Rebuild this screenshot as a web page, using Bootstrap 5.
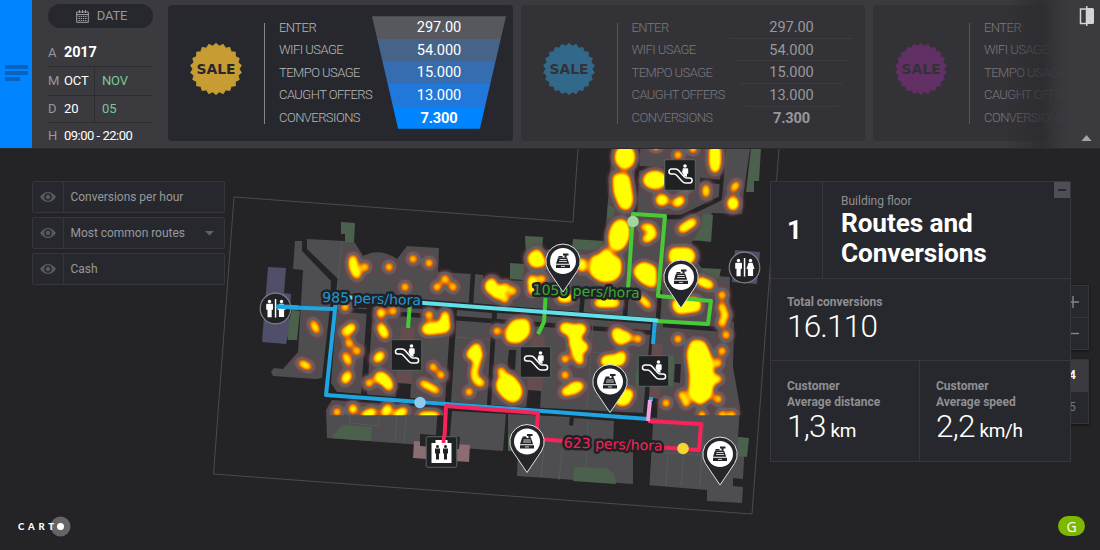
<!DOCTYPE html>
<html lang="en">
<head>
<meta charset="utf-8">
<meta name="viewport" content="width=device-width, initial-scale=1">
<title>Routes and Conversions</title>
<link href="https://cdn.jsdelivr.net/npm/bootstrap@5.3.0/dist/css/bootstrap.min.css" rel="stylesheet">
<style>
body{background:#242426;font-family:Roboto,"Liberation Sans",sans-serif;width:1100px;height:550px;overflow:hidden;position:relative;color:#fff}
.topbar{height:149px;background:#3b3a3f;border-bottom:1px solid #2b2b2d;z-index:3}
.menu-btn{width:32px;background:#0084ff;flex:none;padding:65px 4px 0 5px}
.menu-btn i{display:block;height:4px;background:#0864be;margin-bottom:2px}
.menu-btn i:last-child{width:15px}
.dates{width:105px;margin:4px 15px 0 16px;flex:none;font-size:13px;letter-spacing:-.15px}
.pill{height:24px;border-radius:12px;background:#27282d;color:#97979a;padding-left:2px}
.dates .k{width:16px;color:#98989b}
.dates .ln{border-bottom:1px solid #2d2d31}
.dates .a{width:31px;border-right:1px solid #2d2d31;line-height:inherit}
.grn{color:#77ca97;padding-left:7px}
.offer{width:344.5px;height:136px;border-radius:4px;background:#333237;flex:none;margin:4.5px 8px 0 0}
.offer.on{background:#27282d}
.sale{width:54px;height:54px;margin-left:21px;margin-top:-8px;flex:none}
.bar-v{width:1px;height:101px;background:#55555a;margin-left:21px;flex:none;margin-top:2px}
.on .bar-v{background:#86868a}
.labels{margin-left:14px;width:93px;font-size:13px;font-weight:300;color:#7a7a7f;height:113px;white-space:nowrap;letter-spacing:-.55px;margin-top:-1px}
.on .labels{color:#b8b8bb}
.labels div,.funnel div{height:22.6px;line-height:23px}
.funnel{width:134px;text-align:center;clip-path:polygon(0 0,100% 0,80.5% 100%,19.5% 100%);font-size:14.6px;color:#98989b;height:112.5px;letter-spacing:-.1px}
.funnel div{border-bottom:1px solid #3c3b40}
.on .funnel{color:#fff}
.on .funnel div{border:0}
.f1{background:#57575e}.f2{background:#46638a}.f3{background:#356db0}.f4{background:#2078da}.f5{background:#0084ff}
.funnel div:last-child{font-weight:700;border:0}
.fade-r{right:0;top:0;width:110px;height:148px;background:linear-gradient(90deg,rgba(43,42,46,0) 12%,rgba(44,43,47,.8) 47%,rgba(55,54,59,.93) 62%,#3b3a3f 72%)}
.mapsvg{left:0;top:0}
.layers{width:193px;left:32px;top:181px}
.lay{height:32px;border:1px solid #35353b;border-radius:2px;background:#27282d;color:#98989b;font-size:12px;margin-bottom:4px;letter-spacing:-.03px}
.lay .eye{width:31px;border-right:1px solid #35353b}
.lay .nm{padding-left:6.5px}
.panel{left:770px;top:181px;width:301px;height:281px;background:#27282d;border:1px solid #37373d;z-index:2}
.panel .b{border-color:#37373d!important}
.cap{color:#8f8f93;font-size:12px;line-height:16px}
.val{font-weight:300;font-size:31.5px;line-height:34px;letter-spacing:-.8px}
.unit{font-size:19px;font-weight:400;letter-spacing:-.4px}
.panel h1{font-size:26.2px;font-weight:700;line-height:30px;margin:-1px 0 0;letter-spacing:-.1px}
.minz{right:0;top:0;width:16px;height:16px;background:#4e4e57}
.ctl{left:1051px;width:37.5px;background:#27282d;border:1px solid #35353a;box-shadow:0 1px 3px #0008;z-index:1;font-size:12px;color:#77777b}
.ctl div{padding-left:17px}
.logo{left:18px;top:516px}
.g{left:1058px;top:516px;width:27px;height:20px;border-radius:10px;background:#7db700;font:14px "Open Sans",sans-serif}
</style>
</head>
<body>
<svg class="mapsvg position-absolute" width="1100" height="550" viewBox="0 0 1100 550">
<defs>
<filter id="heat" filterUnits="userSpaceOnUse" x="280" y="130" width="480" height="310" color-interpolation-filters="sRGB">
<feGaussianBlur stdDeviation="3.2"/>
<feColorMatrix values="0 0 0 1.5 0  0 0 0 1.5 0  0 0 0 1.5 0  0 0 0 1.5 0"/>
<feComponentTransfer>
<feFuncR type="table" tableValues=".5 .45 .36 .38 .55 .8 .9 .98 1 1 1"/>
<feFuncG type="table" tableValues=".2 .27 .42 .4 .34 .37 .47 .6 .75 .88 1"/>
<feFuncB type="table" tableValues=".22 .3 .43 .4 .3 .08 0 0 0 0 0"/>
<feFuncA type="table" tableValues="0 .75 .9 .9 .95 1 1 1 1 1 1"/>
</feComponentTransfer>
</filter>
<clipPath id="cut"><rect x="280" y="140" width="480" height="275.3"/></clipPath>
<g id="pin"><path d="M-14.500 9.500A17.200 17.200 0 1 1 14.500 9.500L0 31Z" fill="#25262c" stroke="#e4e4e4" stroke-width="1"/><circle r="13" fill="#fff"/><g fill="#222328"><path d="M-5-3.500h9l2.200 6.300h-13.200zM-7 3.800h14v3.200h-14z"/><path d="M0-7.500h5.500v2h-2v2h-2v-2H0zM-4.500-5h4v1.500h-4z"/></g><path d="M-3.500-1.500h7M-4 .5h8M-2 5.400h4" stroke="#fff" stroke-width=".8"/></g>
<g id="esc"><rect x="-15.300" y="-15.300" width="30.600" height="30.600" rx="1.500" fill="#202125" stroke="#59655f"/><path d="M-8.600-6h4c2.600 0 3 1.200 4.500 2.900l4.500 5c.9 1 1.500 1.200 2.800 1.200h2.400a2.500 2.500 0 0 1 0 5h-3.800c-2 0-2.800-.8-3.900-2.100l-5-5.600c-.9-1-1.400-1.500-2.800-1.500h-2.700a2.450 2.450 0 0 1 0-4.900z" fill="none" stroke="#fff" stroke-width="1.500"/><circle cx="5" cy="-9" r="1.800" fill="#fff"/><path d="M3-6.700h4.200a1 1 0 0 1 1 1v4.500H7v3.200l-2.800-1L2-3z" fill="#fff"/></g>
<g id="wc"><circle r="15.300" fill="#222327" stroke="#808185" stroke-width="1.200"/><g fill="#fff"><path d="M-.7-9.500H.8V9H-.7z"/><circle cx="-6" cy="-7" r="1.700"/><circle cx="6" cy="-7" r="1.700"/><path d="M-8.500-4.800h5c.7 0 1 .5 1 1v5h-1.300v7.500h-4.200V1.200h-1.300v-5c0-.6.300-1 .8-1zM4-4.800h4l2 6.200H8.600v7.200H3.400V1.400H2z"/></g></g>
</defs>
<g fill="none" stroke="#4b4b4c"><path d="M578 148 573 222 234 197 213.500 474 752 514 779 148"/></g>
<g fill="#4e4e50">
<path d="M295 241h7v10l29 30-1 27-8 70-6 1-43-3-2-4 3-4 9 1 15-17 5-82-10-1z"/>
<path d="M307 239l37 2 11 2 8 13q17-9 34 3l10-13 32 2-1 24 34 2-1 29-135-10 2-14-31-30z"/>
<path d="M337 307l30 1-6 86-24-2-6-9zM373 307l78 3-6 92-78-7zM457 310l35 3-5 92-36-3zM497 313l48 3 106 8-8 89-152-8z"/>
<path d="M475 274 483 275 483 279 524 281 526 250 545 250 573 245 604 250 612 149 750 149 744 190 742 214 712 213 702 240 692 241 691 255 702 268 702 275 730 277 729 321 734 322 733 367 740 407 738 437 745 438 743 479 733 478 733 486 743 487 742 503 707 501 707 490 647 485 651 424 655 318 472 303z"/>
<path d="M332 400l106 8-3 38-108-8-1-28zM452 411l54 3-3 37-54-4zM508 414l62 3-1 8 4 1 1-8 40 3-1 25 20 1v37l-116-8 1-25-10-1z"/>
</g>
<g fill="#4b604d">
<path d="M341 222l14 1-1 20-9-1v-8h-4zM292 310l8 1-3 29h-9v-4h-3zM331 438l11-13 30 2-1 14zM510 263l15 1-1 16-14-1zM525 236l18 1-1 14-16 4zM573 239l31 2-1 10-31-2zM751 148h10l-2 33h-5v11h-8zM703 214l10 1-2 27-17-2 5-9zM702 268l19 1-2 10-17-1zM738 437l11 1-2 19-9-1zM574 467l32 1 8 6 2 10-43-3zM608 205l8 3-3 12-6-2z"/>
<path d="M636 370h4l-2 30h-3zM668 355l6 1-1 31-5-1zM508 434h4v17h-4z"/>
</g>
<path d="M268 267l18 1-2 25 7 1-3 42-2 8-24-2zM735 250l25 2-3 32-25-2z" fill="#504f69"/>
<path d="M401 326l14 1-3 57-16-2zM531 334l14 1-3 56-15-1zM652 343l11 1-3 55-11-1z" fill="#654d4f"/>
<path d="M414 441l56 4-1 17-56-4z" fill="#8b6c70"/>
<g fill="#242426"><path d="M397 383l14 1-1 18-15-1zM528 390l13 1-1 19-14-2zM509 350h7l-1 20-8-1zM675 364h6l-1 19-6-1zM651 398l7 1-1 19-9-1zM420 434l40 3-1 12-39-3zM616 421l37 3-4 70-16-1v-45l-18-1z"/></g>
<g fill="none" stroke="#242426" stroke-width="4.500"><path d="M333 309l323 24M421 401l-90-7M663 325l65 5M473 273l-2 30M583 293l-2 22M627 287l-2 29M660 290l-2 29"/><path d="M638 149l-3 64M667 217h15l39-19 3-49M638 168l29 2M700 180l22 2"/></g>
<g fill="none" stroke="#5b5c5b" stroke-width=".8"><path d="M342 242l-5 48M456 337l35 3M593 322l-6 87M593 352l40 3M350 415v8l28 3 2-17M397 415l-2 26M406 418l-2 25M544 449l-3 28M562 451l-3 29M588 421l-2 46M668 452l-2 34M684 452l-3 35M704 415l-4 71M650 452l52 3M727 149l-5 55M614 210l20 2"/></g>

<g clip-path="url(#cut)"><g filter="url(#heat)" fill="none" stroke="#fff" stroke-linecap="round" stroke-linejoin="round">
<path stroke-width="7.800" d="M353 259v8l4 8M365 267h.1M389 267h.1M405 287h.1M345 307h.1M345 332h.1M349 343h.1M357 351h.1M393 311h.1M369 383h.1M389 387h.1M337 412h.1M365 415l8-3M397 415l7-4M413 259h.1M429 263h.1M445 279h.1M437 287h.1M453 287h.1M505 287h.1M513 291h.1M505 299h.1M497 295h.1M542 263l-5-10M542 279h.1M532 291h.1M429 315h.1M445 315h.1M433 367h.1M441 375h.1M469 392h.1M481 383h.1M497 331h.1M501 371h.1M565 359h.1M580 361l-4-8M565 375h.1M638 339h.1M622 355h.1M678 339h.1M718 363h.1M718 379h.1M718 399h.1M682 395h.1M686 403h.1M666 403h.1M702 415h.1M722 351h.1M726 335h.1M722 323h.1M725 315h.1M722 307h.1M722 295h.1M722 415h.1M732 415h.1M678 155h.1M693 149h.1M686 187h.1M646 239h.1M422 416l14 0M676 203h.1"/>
<path stroke-width="6" d="M313 323l4 8M301 363l8 4M345 355l4 8M706 187v8M643 227h8l3 8-8 4M477 355l0 8-3 9 1 8 6 3M422 383l12 6 3 2M641 298l8 8M737 184l-4 5"/>
<path stroke-width="8" d="M352 327l-3 3M348 375l-3 5M381 312v2M381 327l4 8M381 355l-4 4M379 376l6 4 4 4M353 408v2M388 408l-3 5M492 282v7M498 291h2M533 257v4M532 279v5M561 298h8M445 320v4M477 347l-7 8h9M565 392l15-6M715 165v4M655 146h2M681 200l-2 2M693 222l-11 7M582 262v6M598 303h18M700 281l10 4"/>
<path stroke-width="11" d="M427 329l18-2M380 377l5 3M490 286l2 3M533 258l2 4M715 150v14M733 202v3M661 200h2M565 328l10 3 6-2M575 338v7l8 2M573 389l3-2M617 333l3 6 6-2M606 361l14-1M623 397l5-3M620 400h5M678 306l15-3M674 256l16 0"/>
<g fill="#fff" stroke-width="4"><path d="M514 322l13-1 1 12-9 8-11-1 0-10zM500 380q7-8 14 0t6 13-5 7-12-6-3-14zM693 342l10 1 6 13 3 25-3 15-9 7-9-8 1-19-3-23zM672 250h18v12h-18zM674 301l8 4 16-5 1 9-21 3zM593 258l8-1 5-7 5 7 8 3 0 13-6 6-11 1-10-7z"/>
<ellipse cx="625" cy="157" rx="8" ry="10"/><path d="M615 176h12l4 24-3 8-6-1-6-14z"/><ellipse cx="619" cy="235" rx="8" ry="14" transform="rotate(12 619 235)"/><ellipse cx="655" cy="180" rx="10" ry="7"/><path d="M636 269l7-5 11 4v18l-10-4-8-8z"/></g>
</g></g>

<g fill="none" stroke-width="4" stroke-linejoin="round">
<path d="M410 303l-2 25M546 290l-2 32-6 12M628 290l5-76 32 2-7 80 53 5-3 23-52-3" stroke="#48c936"/>
<path d="M277 307l57 2M336 300l-10 95 322 24M655 320l-2 24M651 397v4" stroke="#1ea5e2"/>
<path d="M345 297l313 23.500" stroke="#62e0e8"/>
<path d="M444 448l2-42 92 7-2 26 30 2M648 421l53 3-2 26-44-3" stroke="#f8235a"/>
<path d="M650 400l-2 21" stroke="#efa3e4"/>
</g>
<circle cx="420" cy="402.500" r="5.800" fill="#8ccaf0"/><circle cx="633" cy="221.500" r="5.800" fill="#a2d69c"/><circle cx="683" cy="448.500" r="5.800" fill="#f5d536"/>
<use href="#wc" x="275.500" y="308.500"/><path d="M278 306.500l20 1" stroke="#1ea5e2" stroke-width="4.500" stroke-linecap="round"/><use href="#wc" x="744.500" y="267.500"/>
<use href="#esc" x="406.500" y="355"/><use href="#esc" x="535.500" y="362"/><use href="#esc" x="680" y="175"/><use href="#esc" x="653.500" y="371"/>
<g transform="translate(441.500 452)"><rect x="-15.300" y="-15.300" width="30.600" height="30.600" rx="1.500" fill="#202125" stroke="#59655f"/><path d="M-10-9h4v-3h12v3h4v20h-20z" fill="#fff"/><g fill="#222"><circle cx="-4" cy="-5.500" r="1.500"/><circle cx="4" cy="-5.500" r="1.500"/><path d="M-6.500-3.500h5v5h-1v6h-3v-6h-1zM1.500-3.500h5v5h-1v6h-3v-6h-1z"/></g><path d="M2.500-17l-.5 8" stroke="#f8235a" stroke-width="3.800"/></g>
<g font-family="DejaVu Sans" font-size="14" stroke="#212225" stroke-width="5" stroke-linejoin="round" paint-order="stroke">
<text x="322" y="302" fill="#2399d2" textLength="99" lengthAdjust="spacingAndGlyphs" transform="rotate(1.900 322 302)">985 pers/hora</text>
<text x="532.500" y="294.500" fill="#3aaa35" textLength="107" lengthAdjust="spacingAndGlyphs" transform="rotate(1.900 532 295)">1050 pers/hora</text>
<text x="563.500" y="447.500" fill="#f8235a" textLength="99" lengthAdjust="spacingAndGlyphs" transform="rotate(1.900 564 448)">623 pers/hora</text>
</g>
<use href="#pin" x="563" y="261"/><use href="#pin" x="681" y="277"/><use href="#pin" x="610" y="381.500"/><use href="#pin" x="527" y="441.500"/><use href="#pin" x="720" y="454"/>
</svg>

<header class="topbar d-flex position-relative overflow-hidden">
<div class="menu-btn"><i></i><i></i><i></i></div>
<div class="dates">
<div class="pill d-flex align-items-center justify-content-center"><svg class="me-2" width="13" height="13" viewBox="0 0 13 13" fill="none" stroke="#a0a0a3"><path d="M.7 2h11.600v10.300H.7zM.7 4.600h11.600M3.500 0v3M6.500 0v3M9.500 0v3"/><path d="M2.500 6.500h8M2.500 8.500h8M2.500 10.500h8" stroke-dasharray="1.400 .8" stroke-width="1.200"/></svg>DATE</div>
<div class="ln d-flex align-items-center" style="height:39px;padding-top:11px"><span class="k">A</span><b style="font-size:14.500px">2017</b></div>
<div class="ln d-flex align-items-center" style="height:28.500px"><span class="k">M</span><span class="a" style="line-height:28px">OCT</span><span class="grn">NOV</span></div>
<div class="ln d-flex align-items-center" style="height:27px"><span class="k">D</span><span class="a" style="line-height:26px">20</span><span class="grn">05</span></div>
<div class="d-flex align-items-center text-nowrap" style="height:27px;letter-spacing:-.5px"><span class="k">H</span>09:00 - 22:00</div>
</div>
<div class="offer on d-flex align-items-center"><svg class="sale" viewBox="-27 -27 54 54" data-c="#c69c33" data-t="#27282d"></svg><div class="bar-v"></div>
<div class="labels"><div>ENTER</div><div>WIFI USAGE</div><div>TEMPO USAGE</div><div>CAUGHT OFFERS</div><div>CONVERSIONS</div></div>
<div class="funnel"><div class="f1">297.00</div><div class="f2">54.000</div><div class="f3">15.000</div><div class="f4">13.000</div><div class="f5">7.300</div></div></div>
<div class="offer d-flex align-items-center"><svg class="sale" viewBox="-27 -27 54 54" data-c="#32698a" data-t="#333237"></svg><div class="bar-v"></div>
<div class="labels"><div>ENTER</div><div>WIFI USAGE</div><div>TEMPO USAGE</div><div>CAUGHT OFFERS</div><div>CONVERSIONS</div></div>
<div class="funnel"><div>297.00</div><div>54.000</div><div>15.000</div><div>13.000</div><div>7.300</div></div></div>
<div class="offer d-flex align-items-center"><svg class="sale" viewBox="-27 -27 54 54" data-c="#613064" data-t="#333237"></svg><div class="bar-v"></div>
<div class="labels"><div>ENTER</div><div>WIFI USAGE</div><div>TEMPO USAGE</div><div>CAUGHT OFFERS</div><div>CONVERSIONS</div></div></div>
<div class="fade-r position-absolute"><svg width="110" height="148"><path d="M90.500 9h6v14.500h-6z" fill="none" stroke="#d4d4d4" stroke-width="1.500"/><path d="M96 6h1.500v2h5q1.500 0 1.500 1.500v13q0 1.500-1.500 1.500h-5v2H96z" fill="#d4d4d4"/><path d="M91.500 141l5-6 5 6z" fill="#a5a5a7"/></svg></div>
</header>

<div class="layers position-absolute">
<div class="lay d-flex align-items-stretch"><span class="eye d-flex align-items-center justify-content-center"></span><span class="align-self-center nm">Conversions per hour</span></div>
<div class="lay d-flex align-items-stretch"><span class="eye d-flex align-items-center justify-content-center"></span><span class="align-self-center nm flex-grow-1">Most common routes</span><svg class="align-self-center" style="margin-right:10px" width="9" height="5"><path d="M0 0h9L4.500 4.500z" fill="#606066"/></svg></div>
<div class="lay d-flex align-items-stretch"><span class="eye d-flex align-items-center justify-content-center"></span><span class="align-self-center nm">Cash</span></div>
</div>

<div class="ctl position-absolute" style="top:285px"><div style="height:32px;border-bottom:1px solid #35353a"><svg width="14" height="32"><path d="M0 16h10M4 10v12" stroke="#85858a" stroke-width="1.400"/></svg></div><div style="height:31px"><svg width="14" height="28"><path d="M0 15.500h10" stroke="#85858a" stroke-width="1.400"/></svg></div></div>
<div class="ctl position-absolute" style="top:359px"><div class="text-white fw-bold" style="height:32px;line-height:31px;background:#3b3a3f">4</div><div style="height:31px;line-height:31px">5</div></div>

<section class="panel position-absolute d-flex flex-column">
<div class="minz position-absolute d-flex align-items-center justify-content-center"><svg width="8" height="2"><path d="M0 0h8v2H0z" fill="#27282d"/></svg></div>
<div class="d-flex border-bottom b flex-shrink-0" style="height:97px"><div class="border-end b d-flex align-items-center fw-bold" style="width:52px;padding-left:16px;font-size:26px">1</div><div style="padding:11px 0 0 18px"><div class="cap">Building floor</div><h1>Routes and<br>Conversions</h1></div></div>
<div class="border-bottom b flex-shrink-0" style="height:82px;padding:15px 16px 0"><div class="cap fw-bold">Total conversions</div><div class="val">16.110</div></div>
<div class="d-flex" style="height:100px"><div class="border-end b" style="width:149px;padding:17px 16px 0"><div class="cap fw-bold">Customer<br>Average distance</div><div class="val d-flex align-items-baseline" style="gap:5px"><span>1,3</span><span class="unit">km</span></div></div><div style="padding:17px 16px 0"><div class="cap fw-bold">Customer<br>Average speed</div><div class="val d-flex align-items-baseline" style="gap:5px"><span>2,2</span><span class="unit">km/h</span></div></div></div>
</section>

<svg class="logo position-absolute" width="54" height="22"><circle cx="42.500" cy="10.500" r="10" fill="#656565"/><circle cx="42.500" cy="10.500" r="3.500" fill="#fff"/><text x="0" y="14" fill="#fff" font-family="Lato" font-weight="900" font-size="9.500" textLength="36">CART</text></svg>
<div class="g position-absolute d-flex align-items-center justify-content-center">G</div>

<script>
// Scalloped sale badges
document.querySelectorAll('.sale').forEach(s=>{
  let d='';const n=22;
  for(let i=0;i<n*2;i++){const r=i%2?22.8:25.4,a=Math.PI*i/n-Math.PI/2;d+=(i?'L':'M')+(r*Math.cos(a)).toFixed(2)+' '+(r*Math.sin(a)).toFixed(2);}
  s.innerHTML='<path d="'+d+'Z" fill="'+s.dataset.c+'" stroke="'+s.dataset.c+'" stroke-linejoin="round" stroke-width="1.2"/><text x="-19.500" y="4.800" font-family="DejaVu Sans" font-weight="700" font-size="13.500" textLength="39" lengthAdjust="spacingAndGlyphs" fill="'+s.dataset.t+'">SALE</text>';
});
document.querySelectorAll('.eye').forEach(e=>e.innerHTML='<svg width="16" height="10" viewBox="0 0 16 10"><path d="M0 5Q3.500 0 8 0t8 5q-3.500 5-8 5T0 5z" fill="#58585e"/><circle cx="8" cy="5" r="3" fill="none" stroke="#27282d" stroke-width="1.500"/></svg>');
</script>
<script src="https://cdn.jsdelivr.net/npm/bootstrap@5.3.0/dist/js/bootstrap.bundle.min.js"></script>
</body>
</html>
